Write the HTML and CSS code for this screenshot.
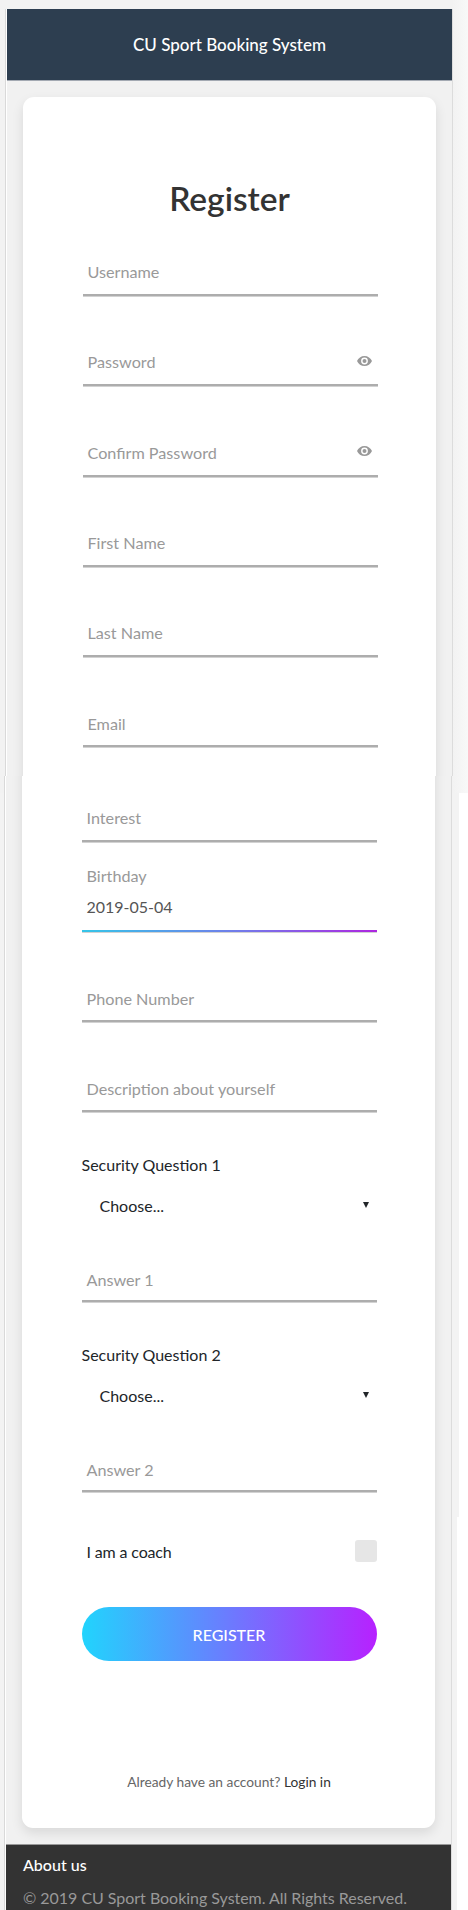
FILE: index.html
```html
<!DOCTYPE html>
<html lang="en">
<head>
<meta charset="utf-8">
<title>Register - CU Sport Booking System</title>
<link rel="stylesheet" href="styles.css">
</head>
<body>
<main class="page">
  <section class="frame frame-top">
    <header class="header">CU Sport Booking System</header>
    <div class="card card-top">
      <h1 class="title">Register</h1>
      <div class="field"><span class="label">Username</span></div>
      <div class="field"><span class="label">Password</span>
        <svg class="eye" viewBox="0 0 15 10"><path fill-rule="evenodd" d="M7.500 0C4.200 0 1.300 2 0 5c1.300 3 4.200 5 7.500 5s6.200-2 7.500-5c-1.300-3-4.200-5-7.500-5zm0 8.400a3.400 3.400 0 1 1 0-6.800 3.400 3.400 0 0 1 0 6.800zm0-5.400a2 2 0 1 0 0 4 2 2 0 0 0 0-4z"/></svg></div>
      <div class="field"><span class="label">Confirm Password</span>
        <svg class="eye" viewBox="0 0 15 10"><path fill-rule="evenodd" d="M7.500 0C4.200 0 1.300 2 0 5c1.300 3 4.200 5 7.500 5s6.200-2 7.500-5c-1.300-3-4.200-5-7.500-5zm0 8.400a3.400 3.400 0 1 1 0-6.800 3.400 3.400 0 0 1 0 6.800zm0-5.400a2 2 0 1 0 0 4 2 2 0 0 0 0-4z"/></svg></div>
      <div class="field"><span class="label">First Name</span></div>
      <div class="field"><span class="label">Last Name</span></div>
      <div class="field field-low"><span class="label">Email</span></div>
    </div>
  </section>
  <section class="frame frame-bottom">
    <div class="card card-bottom">
      <div class="field field-first"><span class="label">Interest</span></div>
      <div class="field field-active"><span class="label">Birthday</span><span class="value">2019-05-04</span></div>
      <div class="field field-low"><span class="label">Phone Number</span></div>
      <div class="field field-low"><span class="label">Description about yourself</span></div>
      <div class="question">Security Question 1</div>
      <div class="select"><span>Choose...</span><svg class="arrow" viewBox="0 0 6 6"><path d="M0 0h6L3 6z"/></svg></div>
      <div class="field answer"><span class="label">Answer 1</span></div>
      <div class="question">Security Question 2</div>
      <div class="select"><span>Choose...</span><svg class="arrow" viewBox="0 0 6 6"><path d="M0 0h6L3 6z"/></svg></div>
      <div class="field answer"><span class="label">Answer 2</span></div>
      <div class="coach"><span>I am a coach</span><i class="checkbox"></i></div>
      <div class="button">REGISTER</div>
      <div class="login">Already have an account? <span class="link">Login in</span></div>
    </div>
    <footer class="footer">
      <div class="about">About us</div>
      <div class="copyright">© 2019 CU Sport Booking System. All Rights Reserved.</div>
    </footer>
  </section>
</main>
</body>
</html>
```

FILE: styles.css
```css
* { box-sizing: border-box; }
body {
  margin: 0;
  font: 16px/20px Lato, sans-serif;
  color: #212529;
  background: #fff;
}
.page {
  height: 1910px;
  padding-top: 9px;
  overflow: hidden;
  background:
    linear-gradient(90deg, #f2f2f2 452px, #f8f8f8 468px) 0 0 / 468px 793px no-repeat,
    linear-gradient(#f3f3f3, #f3f3f3) 0 793px / 459px 724px no-repeat,
    linear-gradient(#f3f3f3, #f3f3f3) 0 1517px / 457px 393px no-repeat;
}
.frame {
  width: 448px;
  margin-left: 5px;
  border-left: 1px solid #d9d9d9;
  border-right: 1px solid #dcdcdc;
  box-shadow: inset 1px 0 #fff;
  padding-left: 1px;
  overflow: hidden;
  background: #f1f1f1;
}
.frame-top { height: 767px; }
.frame-bottom { height: 1134px; margin-left: 4px; }
.header {
  height: 72px;
  border-bottom: 1px solid #a3a9b2;
  background: #2d3e50;
  color: #fff;
  font-size: 17px;
  font-weight: 500;
  line-height: 71px;
  text-align: center;
}
.card {
  width: 413px;
  margin-left: 16px;
  padding: 0 58.500px 0 59.500px;
  background: #fff;
  box-shadow: 0 5px 12px rgba(0, 0, 0, .1);
}
.card-top {
  height: 720px;
  margin-top: 16px;
  padding-top: 81px;
  border-radius: 11px 11px 0 0;
}
.title {
  height: 40px;
  margin: 0 0 -12.300px -1px;
  color: #333;
  font-size: 33.500px;
  line-height: 40px;
  font-weight: 600;
  text-align: center;
}
.field {
  display: flex;
  flex-direction: column;
  justify-content: flex-end;
  position: relative;
  height: 90.300px;
  padding: 0 5px 12px;
  border-bottom: 2px solid #adadad;
  box-shadow: 0 1px #d2d2d2;
  color: #999;
}
.field-low { padding-bottom: 11px; }
.label { font-size: 16.200px; }
.eye {
  position: absolute;
  right: 6px;
  bottom: 18.400px;
  width: 15px;
  height: 10px;
  fill: #999;
}
.card-bottom {
  height: 1082px;
  margin-top: -30px;
  padding-top: 30px;
  border-radius: 0 0 11px 11px;
}
.field-first { height: 65.500px; }
.field-active {
  border-bottom: 0;
  padding-bottom: 15px;
  background: linear-gradient(90deg, #35c5e8, #7478ea 55%, #ad26e0) 0 100% / 100% 2px no-repeat;
}
.value { margin-top: 11px; color: #555; }
.question { height: 20px; margin-top: 43px; }
.select {
  display: flex;
  justify-content: space-between;
  height: 20px;
  margin-top: 21px;
  padding: 0 8px 0 18px;
}
.arrow {
  width: 6px;
  height: 6px;
  margin-top: 6px;
  fill: #212529;
}
.answer { height: 86px; padding-bottom: 10px; }
.coach {
  display: flex;
  justify-content: space-between;
  margin-top: 48px;
  padding-left: 5px;
  line-height: 24px;
  letter-spacing: -.15px;
}
.checkbox {
  width: 22px;
  height: 22px;
  border-radius: 3px;
  background: #e6e6e6;
}
.button {
  height: 54px;
  margin-top: 43px;
  border-radius: 27px;
  background: linear-gradient(90deg, #21d4fd, #b721ff);
  color: #fff;
  font-weight: 500;
  line-height: 56px;
  text-align: center;
}
.login {
  margin-top: 111px;
  color: #666;
  font-size: 13.750px;
  text-align: center;
  white-space: nowrap;
}
.link { color: #333; }
.footer {
  height: 66px;
  margin-top: 16px;
  border-top: 1px solid #999;
  padding: 10px 17px;
  background: #333;
  color: #fff;
}
.about { font-weight: 500; }
.copyright {
  margin-top: 13px;
  color: #999;
  letter-spacing: -.03px;
  white-space: nowrap;
}
```
